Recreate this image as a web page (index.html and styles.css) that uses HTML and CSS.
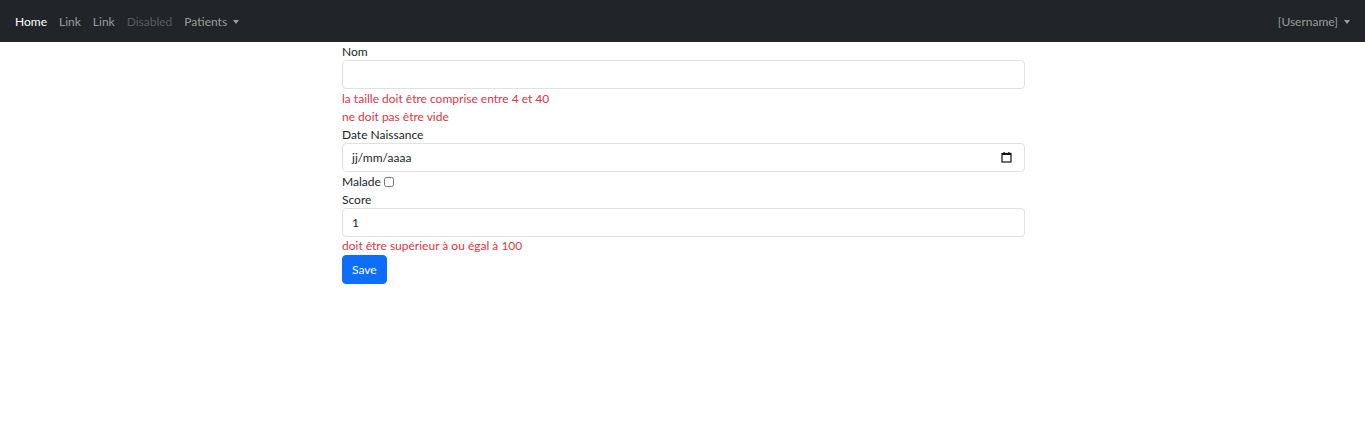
FILE: index.html
```
<!DOCTYPE html>
<html lang="fr">
<head>
<meta charset="utf-8">
<title>Patient</title>
<link rel="stylesheet" href="styles.css">
</head>
<body>
<nav class="navbar">
  <ul class="nav">
    <li><a class="nav-link active" href="#">Home</a></li>
    <li><a class="nav-link" href="#">Link</a></li>
    <li><a class="nav-link" href="#">Link</a></li>
    <li><a class="nav-link disabled" href="#">Disabled</a></li>
    <li><a class="nav-link dropdown-toggle" href="#">Patients</a></li>
  </ul>
  <ul class="nav">
    <li><a class="nav-link dropdown-toggle" href="#">[Username]</a></li>
  </ul>
</nav>
<main class="form-wrap">
  <form class="form">
    <label class="label">Nom</label>
    <input class="control" type="text">
    <span class="error error-first">la taille doit être comprise entre 4 et 40</span>
    <span class="error error-short">ne doit pas être vide</span>
    <label class="label">Date Naissance</label>
    <div class="control date">
      <span>jj/mm/aaaa</span>
      <svg class="cal" width="11" height="11" viewBox="0 0 11 11"><rect x="1" y="1.5" width="9" height="8.5" fill="none" stroke="#111" stroke-width="1.2"/><rect x="1" y="1" width="9" height="2" fill="#111"/><rect x="2.5" y="0" width="1.2" height="2" fill="#111"/><rect x="7.3" y="0" width="1.2" height="2" fill="#111"/></svg>
    </div>
    <label class="label check-row">Malade <input class="check" type="checkbox"></label>
    <label class="label">Score</label>
    <input class="control" type="text" value="1">
    <span class="error">doit être supérieur à ou égal à 100</span>
    <div><button class="btn" type="button">Save</button></div>
  </form>
</main>
</body>
</html>
```
FILE: styles.css
```
* { box-sizing: border-box; }
body {
  margin: 0;
  font-family: Lato, "Noto Sans", sans-serif;
  font-size: 12px;
  line-height: 18px;
  color: #212529;
  background: #fff;
}
.navbar {
  height: 42px;
  background: #212529;
  display: flex;
  align-items: center;
  justify-content: space-between;
  padding: 1px 9px 0;
}
.nav {
  list-style: none;
  margin: 0;
  padding: 0;
  display: flex;
}
.nav-link {
  display: block;
  padding: 6px 6px;
  color: rgba(255,255,255,.55);
  text-decoration: none;
}
.nav-link.active { color: #fff; }
.nav-link.disabled { color: rgba(255,255,255,.25); }
.dropdown-toggle::after {
  content: "";
  display: inline-block;
  margin-left: 6px;
  vertical-align: 2px;
  border-top: 4px solid;
  border-left: 3.5px solid transparent;
  border-right: 3.5px solid transparent;
}
.form-wrap {
  padding-left: 342px;
  width: 1025px;
}
.form {
  display: flex;
  flex-direction: column;
}
.label {
  display: block;
  height: 18px;
  padding-top: 1px;
}
.control {
  display: block;
  width: 100%;
  height: 29px;
  padding: 4px 9px;
  font: inherit;
  color: #212529;
  border: 1px solid #dee2e6;
  border-radius: 4px;
  background: #fff;
  outline: none;
}
.date {
  display: flex;
  align-items: center;
  justify-content: space-between;
  padding: 0 12px 0 9px;
}
.cal { display: block; }
.error {
  display: block;
  color: #dc3545;
  height: 18px;
  line-height: 18px;
}
.error-first { margin-top: 1px; }
.error-short { height: 17px; }
.check-row {
  display: flex;
  align-items: center;
  gap: 3px;
}
.check {
  margin: 0;
  width: 10px;
  height: 10px;
}
.btn {
  font: inherit;
  color: #fff;
  background: #0d6efd;
  border: 1px solid #0d6efd;
  border-radius: 4px;
  height: 29px;
  padding: 0 9px;
  cursor: pointer;
}
```
